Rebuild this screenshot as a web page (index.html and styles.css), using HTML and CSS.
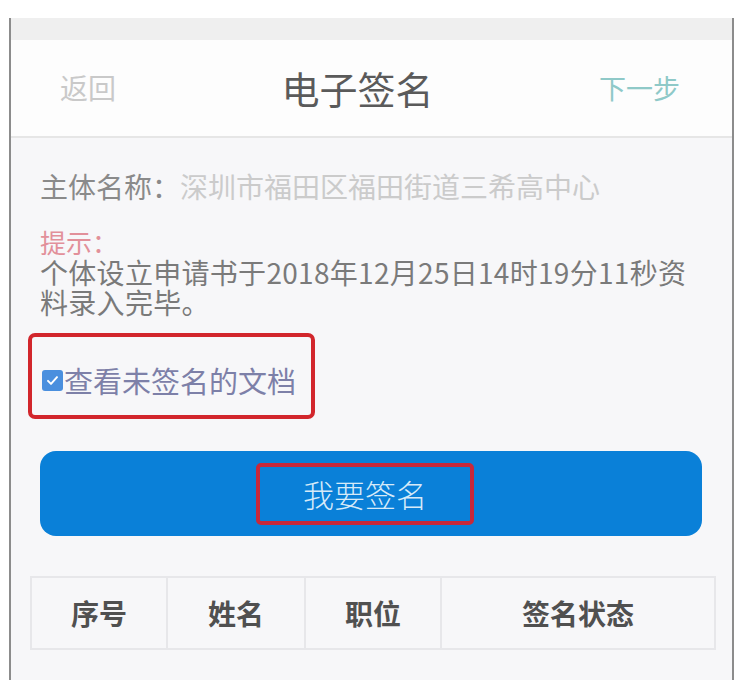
FILE: index.html
```html
<!DOCTYPE html>
<html lang="zh-CN">
<head>
<meta charset="utf-8">
<title>电子签名</title>
<link rel="stylesheet" href="styles.css">
</head>
<body>
<div class="frame">
  <div class="topband"></div>
  <header class="header">
    <span class="back">返回</span>
    <span class="title">电子签名</span>
    <span class="next">下一步</span>
  </header>
  <main class="content">
    <p class="subject"><span class="label">主体名称：</span><span class="value">深圳市福田区福田街道三希高中心</span></p>
    <p class="tip"><span class="tip-title">提示：</span><br>个体设立申请书于2018年12月25日14时19分11秒资料录入完毕。</p>
    <div class="check-wrap">
      <label class="check"><span class="box"><svg viewBox="0 0 20 20" width="15" height="15"><path d="M4 10.5l4 4 8-9" fill="none" stroke="#fff" stroke-width="2.6" stroke-linecap="round" stroke-linejoin="round"/></svg></span>查看未签名的文档</label>
    </div>
    <div class="btn"><span class="btn-text">我要签名</span></div>
    <div class="table">
      <div class="cell c1">序号</div>
      <div class="cell c2">姓名</div>
      <div class="cell c3">职位</div>
      <div class="cell c4">签名状态</div>
    </div>
  </main>
</div>
</body>
</html>
```

FILE: styles.css
```css
html, body {
  margin: 0;
  padding: 0;
  background: #ffffff;
  font-family: "Noto Sans CJK SC", "Noto Sans", sans-serif;
}

.frame {
  box-sizing: border-box;
  margin: 18px 0 0 9px;
  width: 725px;
  height: 662px;
  border-left: 2px solid #8c8c8c;
  border-right: 2px solid #8c8c8c;
  background: #f7f7f9;
  display: flex;
  flex-direction: column;
}

.topband {
  height: 22px;
  background: #efefef;
}

.header {
  box-sizing: border-box;
  height: 98px;
  background: #fdfdfd;
  border-bottom: 2px solid #e6e6e6;
  display: flex;
  justify-content: space-between;
  align-items: center;
  padding: 0 52px 2px 49px;
}

.back {
  font-size: 28px;
  color: #c9c9c9;
}

.title {
  font-size: 38px;
  color: #5a5a5a;
}

.next {
  font-size: 27px;
  color: #8fc9c8;
}

.content {
  padding: 28px 37px 0 29px;
}

.content p {
  margin: 0;
}

.subject {
  font-size: 28px;
  line-height: 40px;
  margin-bottom: 20px !important;
  white-space: nowrap;
}

.label {
  color: #8a8a8a;
}

.value {
  color: #cbcbcb;
}

.tip {
  font-size: 28px;
  line-height: 30px;
  color: #7a7a7a;
  letter-spacing: 0.3px;
}

.tip-title {
  font-size: 26px;
  color: #e2909a;
  letter-spacing: 0;
}

.check-wrap {
  margin: 16px 0 0 -12px;
  box-sizing: border-box;
  width: 287px;
  height: 86px;
  border: 4px solid #d2262c;
  border-radius: 7px;
  display: flex;
  align-items: center;
  padding: 8px 0 0 10px;
}

.check {
  display: flex;
  align-items: center;
  font-size: 29px;
  color: #7d80a8;
}

.box {
  width: 21px;
  height: 21px;
  border-radius: 3px;
  background: #4a8fde;
  display: flex;
  align-items: center;
  justify-content: center;
  margin-right: 1px;
}

.btn {
  margin: 32px 0 0 0;
  width: 662px;
  height: 85px;
  border-radius: 16px;
  background: #0a80d8;
  display: flex;
  align-items: center;
  justify-content: center;
}

.btn-text {
  box-sizing: border-box;
  width: 218px;
  height: 62px;
  border: 4px solid #c8283a;
  border-radius: 5px;
  display: flex;
  align-items: center;
  justify-content: center;
  font-size: 31px;
  font-weight: 300;
  color: #d6eaf8;
  margin-left: -12px;
}

.table {
  margin: 40px 0 0 -10px;
  width: 686px;
  height: 74px;
  display: grid;
  grid-template-columns: 136px 138px 136px 1fr;
  border: 2px solid #e7e7ea;
  box-sizing: border-box;
}

.cell {
  display: flex;
  align-items: center;
  justify-content: center;
  font-size: 28px;
  font-weight: 700;
  color: #505050;
  border-right: 2px solid #e7e7ea;
}

.c4 {
  border-right: none;
}
```
